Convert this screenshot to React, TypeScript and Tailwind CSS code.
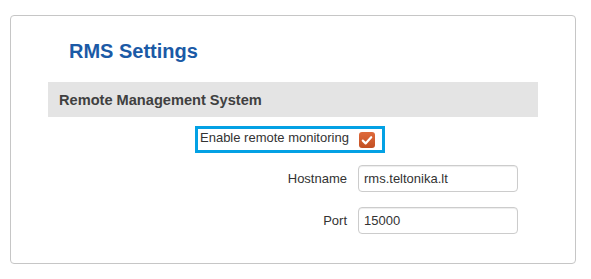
import React from "react";

export default function App() {
  return (
    <div className="w-[591px] h-[279px] bg-white overflow-hidden" style={{ fontFamily: '"Liberation Sans", Arial, sans-serif' }}>
      <div className="ml-[10px] mt-[15px] w-[566px] h-[249px] border border-[#c6c6c6] rounded-[4px]">
        <h1 className="mt-[23px] ml-[58px] text-[20px] leading-[24px] font-bold text-[#1b5aa6]">RMS Settings</h1>
        <div className="mt-[19px] ml-[37px] w-[490px] h-[35px] bg-[#e4e4e4] flex items-center pl-[11px]">
          <span className="text-[14.6px] leading-[16px] font-bold text-[#404040]">Remote Management System</span>
        </div>
        <div className="ml-[37px] mt-[9px] flex flex-col">
          <div className="pl-[147px]">
            <div className="w-[190px] h-[27px] border-[3px] border-[#03a1e4] flex items-start pl-[2px]">
              <span className="w-[159px] shrink-0 pt-[1px] text-[13px] leading-[15px] text-[#333333]">Enable remote monitoring</span>
              <span className="mt-[3px] w-[16px] h-[16px] rounded-[3px] bg-gradient-to-b from-[#df6a3a] to-[#c24f22] flex items-center justify-center">
                <svg width="12" height="11" viewBox="0 0 12 11">
                  <path d="M1.8 5.6 L4.6 8.4 L10.2 2.2" fill="none" stroke="white" strokeWidth="2.2" strokeLinecap="round" strokeLinejoin="round" />
                </svg>
              </span>
            </div>
          </div>
          <div className="mt-[12px] flex items-center">
            <div className="w-[299px] text-right text-[13px] leading-[15px] text-[#333333]">Hostname</div>
            <div className="ml-[11px] w-[160px] h-[27px] border border-[#cccccc] rounded-[4px] shadow-[inset_0_1px_1px_rgba(0,0,0,0.075)] flex items-center pl-[5px] text-[13px] leading-[15px] text-[#333333]">rms.teltonika.lt</div>
          </div>
          <div className="mt-[15px] flex items-center">
            <div className="w-[299px] text-right text-[13px] leading-[15px] text-[#333333]">Port</div>
            <div className="ml-[11px] w-[160px] h-[27px] border border-[#cccccc] rounded-[4px] shadow-[inset_0_1px_1px_rgba(0,0,0,0.075)] flex items-center pl-[5px] text-[13px] leading-[15px] text-[#333333]">15000</div>
          </div>
        </div>
      </div>
    </div>
  );
}
